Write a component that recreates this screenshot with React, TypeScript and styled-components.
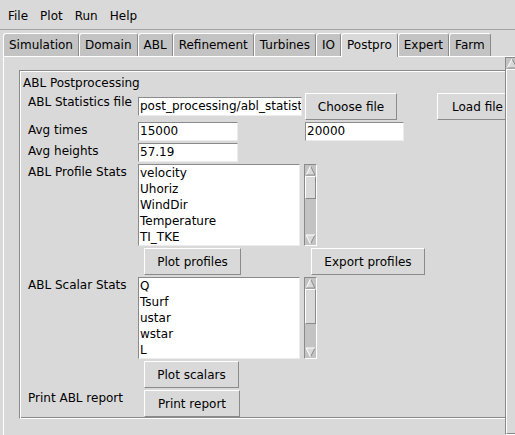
import React from "react";
import styled, { createGlobalStyle } from "styled-components";

const GlobalStyle = createGlobalStyle`
  html, body {
    margin: 0;
    padding: 0;
    background: #d9d9d9;
  }
  body {
    font-family: "DejaVu Sans", "Liberation Sans", sans-serif;
    font-size: 12px;
    color: #000;
  }
`;

const Window = styled.div`
  width: 515px;
  height: 435px;
  overflow: hidden;
  background: #d9d9d9;
  display: flex;
  flex-direction: column;
`;

const MenuBar = styled.div`
  height: 30px;
  flex: none;
  box-sizing: border-box;
  border-bottom: 1px solid #a3a3a3;
  display: flex;
  padding: 9px 0 0 2px;
`;

const MenuItem = styled.div`
  padding: 0 6px;
  line-height: 14px;
`;

const Notebook = styled.div`
  flex: 1;
  width: 530px;
  margin-top: 3px;
  padding-left: 3px;
  display: flex;
  flex-direction: column;
  min-height: 0;
`;

const TabRow = styled.div`
  height: 23px;
  flex: none;
  display: flex;
  align-items: flex-end;
`;

const Tab = styled.div<{ $active?: boolean }>`
  box-sizing: border-box;
  height: ${(p) => (p.$active ? 24 : 23)}px;
  margin-bottom: ${(p) => (p.$active ? -1 : 0)}px;
  position: relative;
  z-index: ${(p) => (p.$active ? 1 : 0)};
  padding: 4px 5px 0;
  line-height: 14px;
  background: ${(p) => (p.$active ? "#d9d9d9" : "#c3c3c3")};
  border: 1px solid;
  border-bottom: none;
  border-color: #fff #8a8a8a transparent #fff;
  border-radius: 3px 3px 0 0;
  white-space: nowrap;
`;

const Pane = styled.div`
  flex: 1;
  display: flex;
  min-height: 0;
  border-top: 1px solid #fff;
  border-left: 1px solid #fff;
`;

const Canvas = styled.div`
  width: 501px;
  flex: none;
  overflow: hidden;
  box-sizing: border-box;
  padding: 13px 0 0 15px;
`;

const LabelFrame = styled.div`
  width: 520px;
  box-sizing: border-box;
  border: 1px solid;
  border-color: #8a8a8a #fff #fff #8a8a8a;
  box-shadow: inset 1px 1px 0 #fff, inset -1px -1px 0 #8a8a8a;
  padding: 5px 0 1px 3px;
`;

const FrameTitle = styled.div`
  line-height: 14px;
  margin-bottom: 3px;
`;

const Rows = styled.div`
  display: flex;
  flex-direction: column;
  gap: 2px;
  padding-left: 5px;
`;

const Row = styled.div`
  display: flex;
  align-items: flex-start;
`;

const FieldLabel = styled.div<{ $pt?: number }>`
  width: 110px;
  flex: none;
  line-height: 16px;
  padding-top: ${(p) => p.$pt ?? 0}px;
  white-space: nowrap;
`;

const Entry = styled.div<{ $w: number; $ml?: number; $mt?: number }>`
  width: ${(p) => p.$w}px;
  height: 19px;
  margin-left: ${(p) => p.$ml ?? 0}px;
  margin-top: ${(p) => p.$mt ?? 0}px;
  box-sizing: border-box;
  flex: none;
  background: #fff;
  border: 1px solid;
  border-color: #8a8a8a #ececec #ececec #8a8a8a;
  padding: 0 0 0 1px;
  line-height: 17px;
  white-space: nowrap;
  overflow: hidden;
`;

const Button = styled.button<{ $w: number; $ml?: number }>`
  width: ${(p) => p.$w}px;
  height: 27px;
  margin: 0 0 0 ${(p) => p.$ml ?? 0}px;
  flex: none;
  box-sizing: border-box;
  padding: 0;
  font: inherit;
  color: #000;
  background: #d9d9d9;
  border: 1px solid;
  border-color: #fff #8a8a8a #8a8a8a #fff;
  border-radius: 0;
  white-space: nowrap;
  overflow: hidden;
`;

const ListBox = styled.div`
  width: 162px;
  height: 82px;
  flex: none;
  box-sizing: border-box;
  background: #fff;
  border: 1px solid;
  border-color: #8a8a8a #ececec #ececec #8a8a8a;
  padding-left: 1px;
  overflow: hidden;
`;

const ListItem = styled.div`
  line-height: 16px;
  white-space: nowrap;
`;

const ScrollBar = styled.div<{ $w: number; $ml?: number; $h?: string }>`
  width: ${(p) => p.$w}px;
  height: ${(p) => p.$h ?? "82px"};
  margin-left: ${(p) => p.$ml ?? 0}px;
  flex: none;
  box-sizing: border-box;
  background: #c3c3c3;
  border: 1px solid;
  border-color: #8a8a8a #fff #fff #8a8a8a;
  display: flex;
  flex-direction: column;
`;

const Trough = styled.div`
  flex: 1;
  display: flex;
  flex-direction: column;
`;

const Thumb = styled.div<{ $size?: number }>`
  ${(p) => (p.$size ? `height: ${p.$size}px;` : "flex: 1;")}
  box-sizing: border-box;
  background: #d9d9d9;
  border: 1px solid;
  border-color: #fff #8a8a8a #8a8a8a #fff;
`;

const ArrowBox = styled.svg`
  display: block;
  flex: none;
`;

function Arrow({ dir, w }: { dir: "up" | "down"; w: number }) {
  const h = 11;
  const m = w / 2;
  if (dir === "up") {
    return (
      <ArrowBox width={w} height={h} viewBox={`0 0 ${w} ${h}`}>
        <polygon points={`${m},1 ${w - 1},${h - 1} 1,${h - 1}`} fill="#d9d9d9" />
        <polyline points={`${m},1 ${w - 1},${h - 1} 1,${h - 1}`} fill="none" stroke="#8a8a8a" strokeWidth={1} />
        <line x1={m} y1={1} x2={1.5} y2={h - 1.5} stroke="#fff" strokeWidth={1} />
      </ArrowBox>
    );
  }
  return (
    <ArrowBox width={w} height={h} viewBox={`0 0 ${w} ${h}`}>
      <polygon points={`1,1 ${w - 1},1 ${m},${h - 1}`} fill="#d9d9d9" />
      <line x1={w - 1} y1={1} x2={m} y2={h - 1} stroke="#8a8a8a" strokeWidth={1} />
      <polyline points={`${w - 1},1 1,1 ${m},${h - 1}`} fill="none" stroke="#fff" strokeWidth={1} />
    </ArrowBox>
  );
}

function VScroll({ thumb }: { thumb: number }) {
  return (
    <ScrollBar $w={13} $ml={4}>
      <Arrow dir="up" w={11} />
      <Trough>
        <Thumb $size={thumb} />
      </Trough>
      <Arrow dir="down" w={11} />
    </ScrollBar>
  );
}

const tabs = [
  "Simulation",
  "Domain",
  "ABL",
  "Refinement",
  "Turbines",
  "IO",
  "Postpro",
  "Expert",
  "Farm",
];

// only the rows that are scrolled into view
const profileStats = ["velocity", "Uhoriz", "WindDir", "Temperature", "TI_TKE"];
const scalarStats = ["Q", "Tsurf", "ustar", "wstar", "L"];

export default function App() {
  return (
    <>
      <GlobalStyle />
      <Window>
        <MenuBar>
          {["File", "Plot", "Run", "Help"].map((m) => (
            <MenuItem key={m}>{m}</MenuItem>
          ))}
        </MenuBar>
        <Notebook>
          <TabRow>
            {tabs.map((t) => (
              <Tab key={t} $active={t === "Postpro"}>
                {t}
              </Tab>
            ))}
          </TabRow>
          <Pane>
            <Canvas>
              <LabelFrame>
                <FrameTitle>ABL Postprocessing</FrameTitle>
                <Rows>
                  <Row>
                    <FieldLabel $pt={1}>ABL Statistics file</FieldLabel>
                    <Entry $w={164} $mt={4}>
                      post_processing/abl_statist
                    </Entry>
                    <Button $w={92} $ml={3}>
                      Choose file
                    </Button>
                    <Button $w={81} $ml={40}>
                      Load file
                    </Button>
                  </Row>
                  <Row>
                    <FieldLabel>Avg times</FieldLabel>
                    <Entry $w={100}>15000</Entry>
                    <Entry $w={99} $ml={67}>
                      20000
                    </Entry>
                  </Row>
                  <Row>
                    <FieldLabel>Avg heights</FieldLabel>
                    <Entry $w={100}>57.19</Entry>
                  </Row>
                  <Row>
                    <FieldLabel>ABL Profile Stats</FieldLabel>
                    <ListBox>
                      {profileStats.map((s) => (
                        <ListItem key={s}>{s}</ListItem>
                      ))}
                    </ListBox>
                    <VScroll thumb={23} />
                  </Row>
                  <Row>
                    <FieldLabel />
                    <Button $w={97} $ml={6}>
                      Plot profiles
                    </Button>
                    <Button $w={114} $ml={70}>
                      Export profiles
                    </Button>
                  </Row>
                  <Row>
                    <FieldLabel>ABL Scalar Stats</FieldLabel>
                    <ListBox>
                      {scalarStats.map((s) => (
                        <ListItem key={s}>{s}</ListItem>
                      ))}
                    </ListBox>
                    <VScroll thumb={35} />
                  </Row>
                  <Row>
                    <FieldLabel />
                    <Button $w={95} $ml={6}>
                      Plot scalars
                    </Button>
                  </Row>
                  <Row>
                    <FieldLabel>Print ABL report</FieldLabel>
                    <Button $w={96} $ml={6}>
                      Print report
                    </Button>
                  </Row>
                </Rows>
              </LabelFrame>
            </Canvas>
            <ScrollBar $w={14} $h="100%">
              <Arrow dir="up" w={12} />
              <Trough>
                <Thumb />
              </Trough>
            </ScrollBar>
          </Pane>
        </Notebook>
      </Window>
    </>
  );
}
